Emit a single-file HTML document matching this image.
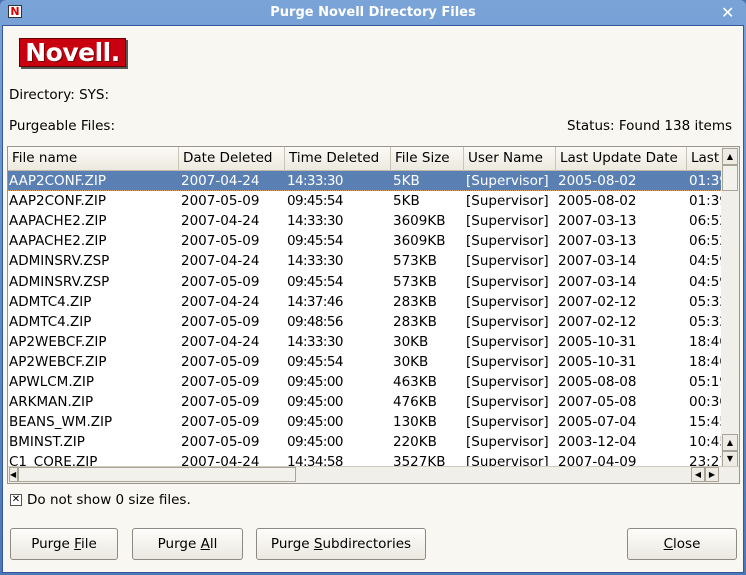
<!DOCTYPE html>
<html><head><style>
*{margin:0;padding:0;box-sizing:border-box}
body{width:746px;height:575px;overflow:hidden;background:#4a72b0;font-family:"DejaVu Sans","Liberation Sans",sans-serif;font-size:13.5px;color:#000;position:relative}
.win{position:absolute;left:0;top:0;width:746px;height:575px;border-radius:6px 6px 0 0;background:linear-gradient(#7aa4d8,#5d8bc8 50%,#4c78b8);}
.title{position:absolute;left:0;top:0;width:746px;height:25px;color:#fff;font-weight:bold;font-size:13px;text-align:center;line-height:25px}
.client{position:absolute;left:2px;top:25px;width:742px;height:548px;background:#f8f7f2;border:1px solid #36579a}
.abs{position:absolute}
.logo{left:19px;top:38px;width:107px;height:29px;background:#c8000f;border:1px solid #600;box-shadow:2px 2px 0 #555;color:#fff;font-weight:bold;font-size:25px;line-height:27px;text-align:center;font-family:"DejaVu Sans",sans-serif;letter-spacing:-0.5px;text-shadow:1px 1px 0 #700}
.table{left:7px;top:146px;width:733px;height:338px;border:1px solid #9a968c;background:#fff;overflow:hidden}
.hdr{position:absolute;top:0;left:0;height:24px;width:720px;background:linear-gradient(#fbfaf6,#ece9df);border-bottom:1px solid #bdb8ab}
.hdr div{position:absolute;top:0;height:24px;line-height:23px;padding-left:4px;border-right:1px solid #c8c4b8;white-space:nowrap;overflow:hidden}
.row{position:absolute;left:0;width:713px;height:20px;line-height:20px;white-space:nowrap}
.row span{position:absolute;top:0;overflow:hidden}
.sel{background:#5a7fb3;color:#fff;border-bottom:1px dotted #d8a060}
.btn{position:absolute;top:528px;height:32px;border:1px solid #8c8a82;border-radius:3px;background:linear-gradient(#fdfdfb,#ebe8e0);text-align:center;line-height:31px;font-size:13.5px}
.sb{position:absolute;background:#eeebe4;border:1px solid #a8a498}
</style></head><body>
<div class="win"></div>
<div class="title">Purge Novell Directory Files</div>
<div class="abs" style="left:8px;top:5px;width:14px;height:13px;background:#fff;border:1px solid #333;color:#d00;font-size:11px;font-weight:bold;line-height:11px;text-align:center">N</div>
<div class="abs" style="left:721px;top:3px;color:#fff;font-size:16px;font-weight:bold">✕</div>
<div class="client"></div>
<div class="abs logo">Novell.</div>
<div class="abs" style="left:9px;top:87px">Directory: SYS:</div>
<div class="abs" style="left:9px;top:118px">Purgeable Files:</div>
<div class="abs" style="right:14px;top:118px">Status: Found 138 items</div>
<div class="abs table">
<div class="hdr">
<div style="left:0;width:171px">File name</div>
<div style="left:171px;width:106px">Date Deleted</div>
<div style="left:277px;width:106px">Time Deleted</div>
<div style="left:383px;width:73px">File Size</div>
<div style="left:456px;width:92px">User Name</div>
<div style="left:548px;width:131px">Last Update Date</div>
<div style="left:679px;width:41px;border:none">Last</div>
</div>
<div id="rows"></div>
<div class="sb" style="left:713px;top:0;width:18px;height:320px;border:none;background:#f1efe9"></div>
<div class="sb" style="left:714px;top:1px;width:16px;height:17px;font-size:8px;text-align:center;line-height:15px">▲</div>
<div class="sb" style="left:714px;top:18px;width:16px;height:26px;background:#f3f1ec"></div>
<div class="sb" style="left:714px;top:287px;width:16px;height:17px;font-size:8px;text-align:center;line-height:15px">▲</div>
<div class="sb" style="left:714px;top:304px;width:16px;height:16px;font-size:8px;text-align:center;line-height:14px">▼</div>
<div class="sb" style="left:0;top:319px;width:731px;height:17px;border:none;border-top:1px solid #d0ccc2;background:#f1efe9"></div>
<div class="sb" style="left:1px;top:320px;width:9px;height:15px;font-size:8px;line-height:13px">◀</div>
<div class="sb" style="left:10px;top:320px;width:278px;height:15px;background:#f3f1ec"></div>
<div class="sb" style="left:683px;top:320px;width:14px;height:15px;font-size:8px;line-height:13px;text-align:center">◀</div>
<div class="sb" style="left:697px;top:320px;width:14px;height:15px;font-size:8px;line-height:13px;text-align:center">▶</div>
</div>
<div class="abs" style="left:10px;top:494px;width:12px;height:12px;border:1px solid #555;font-size:10px;line-height:10px;text-align:center;font-weight:bold;background:#fff">✕</div>
<div class="abs" style="left:27px;top:492px">Do not show 0 size files.</div>
<div class="btn" style="left:10px;width:108px">Purge <u>F</u>ile</div>
<div class="btn" style="left:132px;width:111px">Purge <u>A</u>ll</div>
<div class="btn" style="left:256px;width:170px">Purge <u>S</u>ubdirectories</div>
<div class="btn" style="left:627px;width:110px"><u>C</u>lose</div>
<script>
var d=[
["AAP2CONF.ZIP","2007-04-24","14:33:30","5KB","2005-08-02","01:39"],
["AAP2CONF.ZIP","2007-05-09","09:45:54","5KB","2005-08-02","01:39"],
["AAPACHE2.ZIP","2007-04-24","14:33:30","3609KB","2007-03-13","06:52"],
["AAPACHE2.ZIP","2007-05-09","09:45:54","3609KB","2007-03-13","06:52"],
["ADMINSRV.ZSP","2007-04-24","14:33:30","573KB","2007-03-14","04:59"],
["ADMINSRV.ZSP","2007-05-09","09:45:54","573KB","2007-03-14","04:59"],
["ADMTC4.ZIP","2007-04-24","14:37:46","283KB","2007-02-12","05:32"],
["ADMTC4.ZIP","2007-05-09","09:48:56","283KB","2007-02-12","05:32"],
["AP2WEBCF.ZIP","2007-04-24","14:33:30","30KB","2005-10-31","18:40"],
["AP2WEBCF.ZIP","2007-05-09","09:45:54","30KB","2005-10-31","18:40"],
["APWLCM.ZIP","2007-05-09","09:45:00","463KB","2005-08-08","05:19"],
["ARKMAN.ZIP","2007-05-09","09:45:00","476KB","2007-05-08","00:30"],
["BEANS_WM.ZIP","2007-05-09","09:45:00","130KB","2005-07-04","15:45"],
["BMINST.ZIP","2007-05-09","09:45:00","220KB","2003-12-04","10:45"],
["C1_CORE.ZIP","2007-04-24","14:34:58","3527KB","2007-04-09","23:27"]];
var h="",L=[1,173,279,385,458,550,681];
d.forEach(function(r,i){h+='<div class="row'+(i==0?' sel':'')+'" style="top:'+(24+i*20.1)+'px">';
var v=[r[0],r[1],r[2],r[3],"[Supervisor]",r[4],r[5]];
v.forEach(function(t,j){h+='<span style="left:'+L[j]+'px'+(j==6?';width:32px':'')+(j==2?';letter-spacing:-0.6px':'')+'">'+t+'</span>'});h+='</div>'});
document.getElementById("rows").innerHTML=h;
</script>
</body></html>
